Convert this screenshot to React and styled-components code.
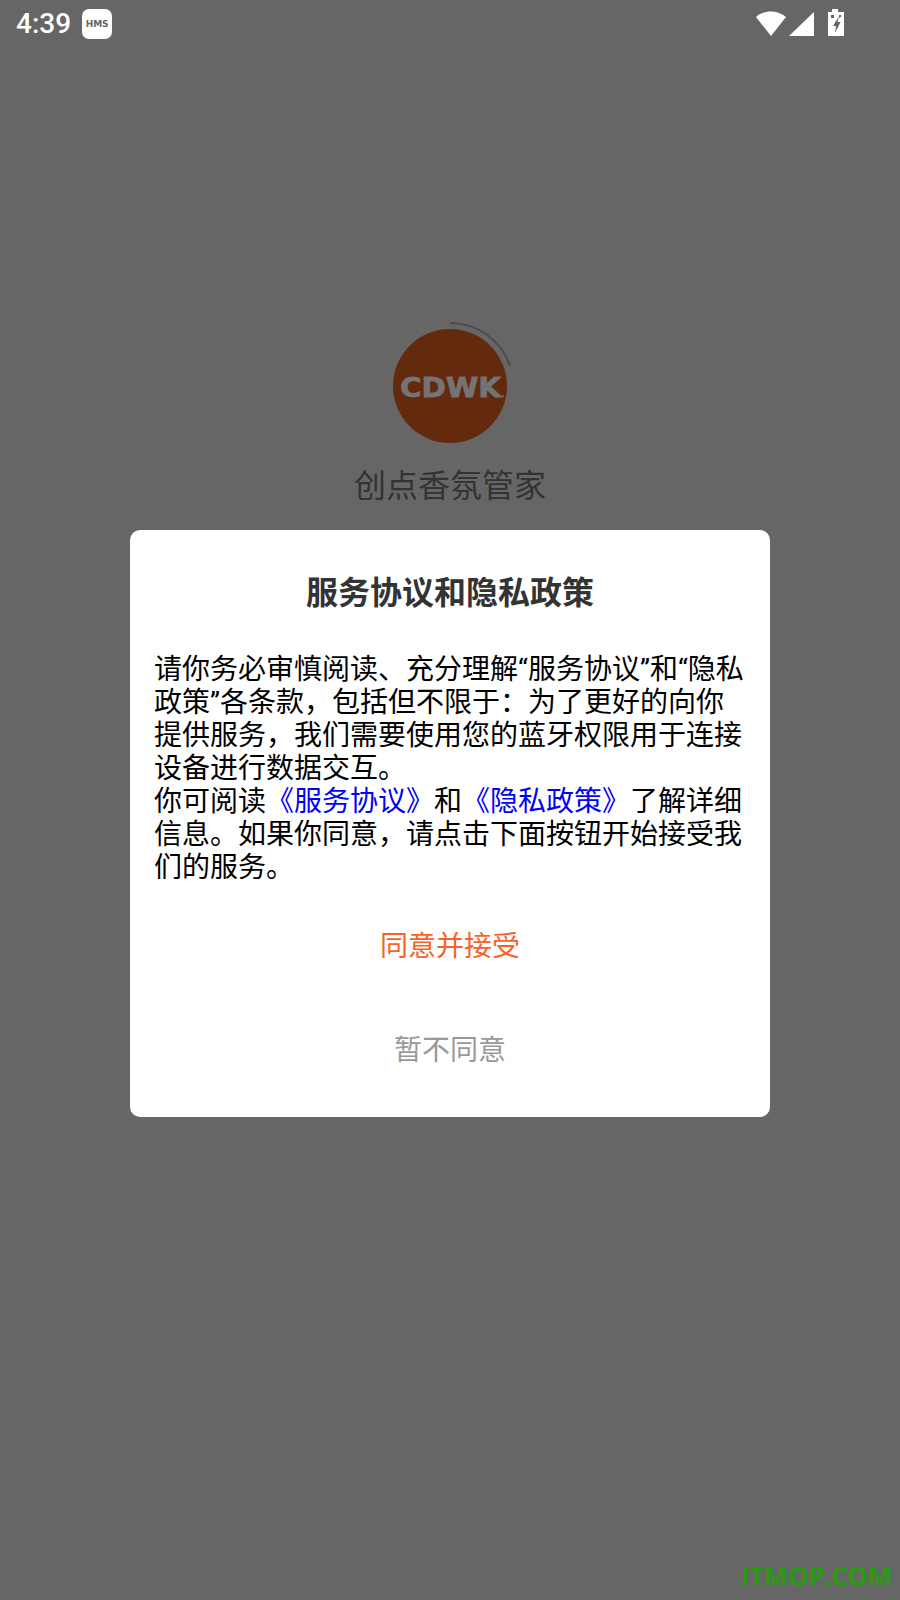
import React from 'react'
import styled, { createGlobalStyle } from 'styled-components'

const cjk = '"Roboto", "Noto Sans CJK SC", sans-serif'

const GlobalStyle = createGlobalStyle`
html, body {
    margin: 0;
    padding: 0;
    background: #666666;
}
* {
    box-sizing: border-box;
}
`

const Page = styled.div`
position: relative;
width: 900px;
height: 1600px;
background: #666666;
overflow: hidden;
display: flex;
flex-direction: column;
align-items: center;
font-family: ${cjk};
`

const StatusBar = styled.div`
width: 100%;
height: 48px;
display: flex;
align-items: center;
padding: 0 54px 0 16px;
`

const Time = styled.span`
font-family: "Roboto", sans-serif;
font-size: 28px;
font-weight: 500;
color: #fff;
line-height: 48px;
`

const HmsBadge = styled.span`
width: 30px;
height: 30px;
margin-left: 11px;
margin-top: -1px;
background: #fff;
border-radius: 7px;
display: flex;
align-items: center;
justify-content: center;
font-family: "DejaVu Sans", sans-serif;
font-size: 9px;
font-weight: 700;
color: #666;
`

const StatusIcons = styled.div`
margin-left: auto;
display: flex;
align-items: center;
`

const Logo = styled.svg`
display: block;
margin-top: 273px;
margin-left: 6px;
`

const AppName = styled.div`
margin-top: 20px;
font-size: 32px;
line-height: 46px;
color: #333;
`

const Card = styled.div`
width: 640px;
height: 587px;
margin-top: 21px;
background: #fff;
border-radius: 10px;
padding: 0 24px;
display: flex;
flex-direction: column;
`

const Title = styled.div`
margin-top: 39px;
font-size: 32px;
font-weight: 700;
line-height: 48px;
text-align: center;
color: #333;
`

const Body = styled.div`
margin-top: 36px;
font-size: 28px;
line-height: 33px;
color: #000;
`

const Link = styled.span`
color: #0000ff;
`

const Action = styled.div`
height: 104px;
display: flex;
align-items: center;
justify-content: center;
font-size: 28px;
color: ${({ $tone }) => $tone};
`

const Actions = styled.div`
margin-top: 8px;
display: flex;
flex-direction: column;
`

const Watermark = styled.div`
position: absolute;
right: 8px;
bottom: 9px;
font-family: "Open Sans", sans-serif;
font-size: 26px;
font-weight: 700;
letter-spacing: -0.4px;
line-height: 30px;
color: #2a9a12;
`

const App = () => {
    return (
        <Page>
            <GlobalStyle />
            <StatusBar>
                <Time>4:39</Time>
                <HmsBadge>HMS</HmsBadge>
                <StatusIcons>
                    <svg width="90" height="30" viewBox="0 0 90 30">
                        <path d="M0 8 C 8 0.5 22 0.5 30 8 L15 27 Z" fill="#fff" />
                        <path d="M33 27 L58 3 V27 Z" fill="#fff" />
                        <path d="M72 3 H76 V0 H82 V3 H88 V27 H72 Z" fill="#fff" />
                        <path d="M75 6 H78 V9 H75 Z M83 6 H85 V8 L83 9 Z" fill="#666" />
                        <path d="M83 7 L77 17 H80 L79 24 L84.5 13 H81.5 Z" fill="#666" />
                    </svg>
                </StatusIcons>
            </StatusBar>
            <Logo width="120" height="122" viewBox="0 0 120 122">
                <circle cx="57" cy="65" r="57" fill="#642a0e" />
                <path d="M57 2 A63 63 0 0 1 117 45" fill="none" stroke="#4c4c4c" strokeWidth="2" />
                <text x="7" y="76" textLength="101" lengthAdjust="spacingAndGlyphs" fontFamily="DejaVu Sans" fontWeight="700" fontSize="27" fill="#747474" stroke="#747474" strokeWidth="0.8">CDWK</text>
                <circle cx="110" cy="75" r="1" fill="#747474" />
            </Logo>
            <AppName>创点香氛管家</AppName>
            <Card>
                <Title>服务协议和隐私政策</Title>
                <Body>
                    请你务必审慎阅读、充分理解“服务协议”和“隐私政策”各条款，包括但不限于：为了更好的向你提供服务，我们需要使用您的蓝牙权限用于连接设备进行数据交互。
                    <br />
                    你可阅读<Link>《服务协议》</Link>和<Link>《隐私政策》</Link>了解详细信息。如果你同意，请点击下面按钮开始接受我们的服务。
                </Body>
                <Actions>
                    <Action $tone="#f8612a">同意并接受</Action>
                    <Action $tone="#999999">暂不同意</Action>
                </Actions>
            </Card>
            <Watermark>ITMOP.COM</Watermark>
        </Page>
    )
}

export default App
